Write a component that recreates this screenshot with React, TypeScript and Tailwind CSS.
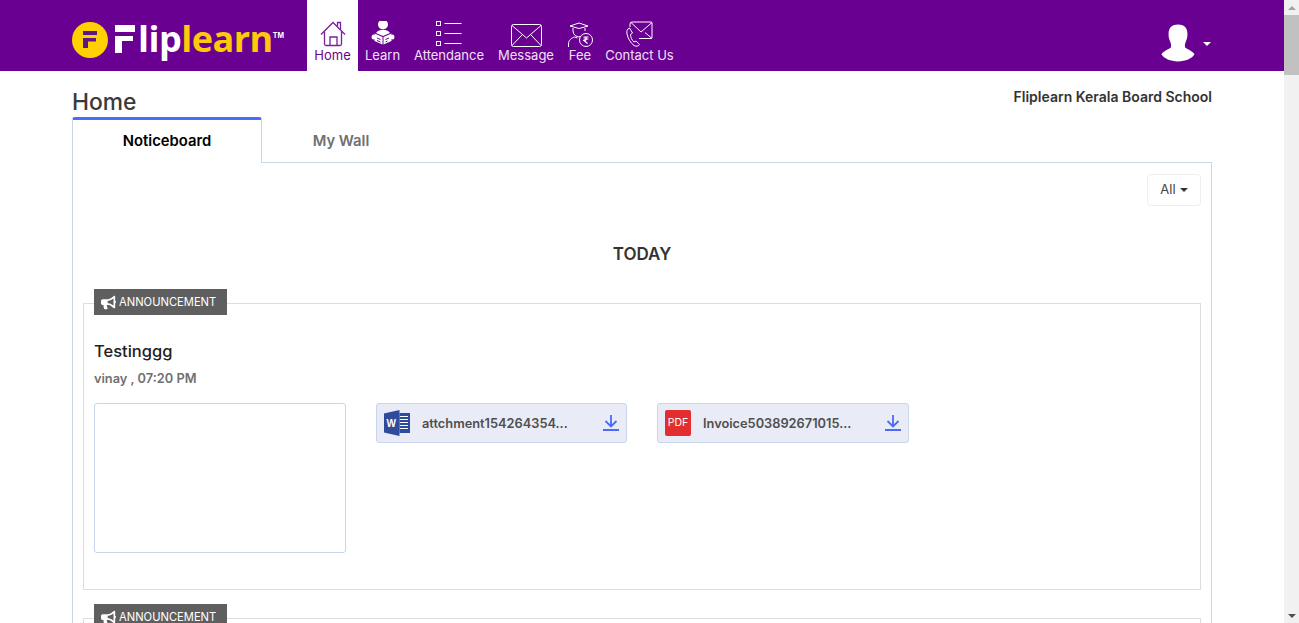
import { FaBullhorn } from 'react-icons/fa';

function HomeIcon() {
  return (
    <svg width="26" height="26" viewBox="0 0 26 26" fill="none" stroke="#7a1fa0" strokeWidth="1.300">
      <path d="M1 13.500 13 1.500 25 13.500" />
      <path d="M4.500 10.500V23a1.500 1.500 0 0 0 1.500 1.500h14a1.500 1.500 0 0 0 1.500-1.500V10.500" />
      <path d="M10 24.500v-8.500h7v8.500" />
      <path d="M17.500 5V1.500h3v7" />
    </svg>
  );
}

function LearnIcon() {
  return (
    <svg width="24" height="26" viewBox="0 2 24 26" fill="white">
      <circle cx="12" cy="5.500" r="5" />
      <path d="M5 14c1.500-2.500 4-3 7-3s5.500.5 7 3l-7 3z" />
      <path d="M3.500 14.500 11.500 18v7.500l-8-3.500z" />
      <path d="M20.500 14.500 12.500 18v7.500l8-3.500z" />
      <ellipse cx="2.500" cy="18" rx="2" ry="2.500" />
      <ellipse cx="21.500" cy="18" rx="2" ry="2.500" />
      <path d="M14.500 20.500l3.500-1.500M14.500 23l2-1" stroke="#6a0091" strokeWidth="1" />
      <path d="M9.500 20.500 6 19M9.500 23l-3.500-1.500" stroke="#6a0091" strokeWidth="1" />
    </svg>
  );
}

function AttendanceIcon() {
  return (
    <svg width="26" height="26" viewBox="0 0 26 26" fill="none" stroke="white" strokeWidth="1">
      <rect x="0.500" y="0.500" width="4" height="4" />
      <rect x="0.500" y="10.500" width="4" height="4" />
      <rect x="0.500" y="20.500" width="4" height="4" />
      <path d="M8.500 2.500h17M8.500 12.500h17M8.500 22.500h17" />
    </svg>
  );
}

function MessageIcon() {
  return (
    <svg width="31" height="23" viewBox="0 0 31 23" fill="none" stroke="white" strokeWidth="1">
      <rect x="0.500" y="0.500" width="30" height="22" rx="2" />
      <path d="M1 1.500 15.500 14 30 1.500M1 21.500l10-10.500M30 21.500 20 11" />
    </svg>
  );
}

function FeeIcon() {
  return (
    <svg width="25" height="25" viewBox="0 0 25 25" fill="none" stroke="white" strokeWidth="1">
      <path d="M2 4 11 1l9 3-9 2.500z" />
      <path d="M5 6v3a6 6 0 0 0 8 5.500M17 6v3" />
      <path d="M.5 25v-3c0-4 3-6 6-7l3 1" />
      <circle cx="18" cy="18" r="6.500" />
      <path d="M15.500 15h5M15.500 17h5M16 15c3 0 3 3.500 0 3.500l3.500 3" strokeWidth="1.200" />
    </svg>
  );
}

function ContactIcon() {
  return (
    <svg width="27" height="26" viewBox="0 0 27 26" fill="none" stroke="white" strokeWidth="1">
      <path d="M4 6V3a2 2 0 0 1 2-2h19a1 1 0 0 1 1 1v14.500a1 1 0 0 1-1 1H13" />
      <path d="M5 1.500 15 11 26 1.500M19 11.500l7 6" />
      <path d="M3.500 7C1 8 .500 10 1 13c.800 4 3.500 9 7 11.500 2 1.200 4.500 1 5.500-1l-3.500-3.500-2 1C6 19.500 4.500 16 4.500 13.500L6.500 12z" />
    </svg>
  );
}

function UserSilhouette() {
  return (
    <svg width="34" height="40" viewBox="0 0 36 41" fill="white">
      <path d="M18 1c6 0 10 3 10 10 0 3-.5 5-1.500 7.500C25.500 21 25 23 25.500 25c1 2 8 3.500 10 7.500C33 37 26 40 18 40S3 37 .500 32.500C2.500 28.500 9.500 27 10.500 25c.5-2 0-4-1-6.500C8.500 16 8 14 8 11 8 4 12 1 18 1z" />
    </svg>
  );
}

function DownloadIcon() {
  return (
    <svg width="16" height="16" viewBox="0 0 16 16" fill="none" stroke="#4a6cf7" strokeWidth="1.800">
      <path d="M8 0v11M2.500 6 8 11.500 13.500 6M0 15h16" />
    </svg>
  );
}

function WordIcon() {
  return (
    <svg width="26" height="26" viewBox="0 0 26 26">
      <path d="M0 3.500 15.500 0v26L0 22.500z" fill="#2f4b9b" />
      <rect x="15.500" y="3" width="10.500" height="20" fill="#2f4b9b" />
      <path d="M16 6.500h8M16 9.500h8M16 12.500h8M16 15.500h8M16 18.500h8" stroke="white" strokeWidth="1.200" />
      <text x="2.600" y="17" fontSize="10" fontWeight="700" fill="white" fontFamily="'Liberation Sans', sans-serif">W</text>
    </svg>
  );
}

const navItems = [
  { label: 'Home', icon: <HomeIcon />, width: 'w-[51px]', active: true },
  { label: 'Learn', icon: <LearnIcon />, width: 'w-[49px]' },
  { label: 'Attendance', icon: <AttendanceIcon />, width: 'w-[84px]' },
  { label: 'Message', icon: <MessageIcon />, width: 'w-[70px]' },
  { label: 'Fee', icon: <FeeIcon />, width: 'w-[38px]' },
  { label: 'Contact Us', icon: <ContactIcon />, width: 'w-[81px]' },
];

function Attachment({ icon, name, width }: { icon: React.ReactNode; name: string; width: string }) {
  return (
    <div className={`${width} h-10 bg-[#e9ecf6] border border-[#c8d6ec] rounded-[3px] flex items-center pl-[7px] pr-[7px]`}>
      <div className="w-[26px] flex justify-center shrink-0">{icon}</div>
      <span className="ml-[12px] pt-[1px] text-[12.800px] font-semibold text-[#4f4f4f] flex-1 whitespace-nowrap">{name}</span>
      <DownloadIcon />
    </div>
  );
}

function Badge() {
  return (
    <div className="w-[133px] h-[26px] bg-[#5f5f5f] text-white text-[11.200px] flex items-center pl-[7px] gap-[3px] ml-[10px] -mt-[15px]">
      <FaBullhorn size={15} />
      <span>ANNOUNCEMENT</span>
    </div>
  );
}

export default function App() {
  return (
    <div className="flex h-[623px] overflow-hidden font-['Inter','Lato',sans-serif] bg-white">
      <div className="flex-1 min-w-0">
        <header className="h-[71px] bg-[#6a0091]">
          <div className="w-[1140px] mx-auto h-full flex">
            <div className="w-[235px] flex items-start pt-[22px]">
              <svg width="36" height="36" viewBox="0 0 36 36" className="shrink-0">
                <circle cx="18" cy="18" r="18" fill="#ffd100" />
                <path d="M11 9h14v4H11zM11 16h13v3.500h-8V26h-5z" fill="#5c1780" />
              </svg>
              <svg width="20" height="28" viewBox="0 0 20 28" fill="white" className="ml-[7px] mt-[3px] shrink-0">
                <rect x="0" y="0" width="20" height="7" />
                <rect x="0" y="11" width="7" height="17" />
                <rect x="7" y="11" width="11" height="5" />
              </svg>
              <span className="ml-[3px] -mt-[1px] text-[36px] leading-none font-bold font-['Open_Sans',sans-serif] tracking-[-0.500px] text-white">
                lip<span className="text-[#ffc90b]">learn</span>
              </span>
              <span className="mt-[9px] text-[7px] leading-[9px] font-bold text-white">TM</span>
            </div>
            <nav className="flex">
              {navItems.map(item => (
                <div
                  key={item.label}
                  className={`${item.width} h-[71px] flex flex-col items-center justify-end pb-[7px] ${item.active ? 'bg-white text-[#6a008f]' : 'text-[#f0e0f6]'}`}
                >
                  <div className="h-[30px] flex items-end -mb-[1px]">{item.icon}</div>
                  <span className="text-[13px] leading-[18px] whitespace-nowrap">{item.label}</span>
                </div>
              ))}
            </nav>
            <div className="ml-auto flex items-start pt-[23px] pr-[1px]">
              <UserSilhouette />
              <div className="ml-[8px] mt-[19px] w-0 h-0 border-x-[4.500px] border-x-transparent border-t-[4px] border-t-white" />
            </div>
          </div>
        </header>

        <main className="w-[1140px] mx-auto">
          <div className="flex justify-between h-[46px]">
            <h1 className="text-[22.800px] leading-[30px] mt-[16px] text-[#3a3a3a] font-medium">Home</h1>
            <span className="text-[14px] font-semibold text-[#333] mt-[17px] leading-[18px]">Fliplearn Kerala Board School</span>
          </div>

          <div className="flex h-[46px] relative z-10">
            <div className="w-[190px] h-[46px] border-x border-[#c9d6e3] border-t-[3px] border-t-[#4a6cf7] rounded-t-[3px] bg-white flex items-center justify-center text-[14.800px] font-semibold text-black">
              Noticeboard
            </div>
            <div className="w-[158px] h-[46px] pt-[3px] flex items-center justify-center text-[14.800px] font-semibold text-[#707070] border-b border-[#c9d6e3]">
              My Wall
            </div>
          </div>

          <div className="border border-[#c9d6e3] -mt-[1px] px-[10px] pt-[11px] h-[600px]">
            <div className="flex justify-end">
              <div className="w-[54px] h-[32px] border border-[#eeeeee] rounded-[4px] flex items-center justify-center gap-[4px] text-[13px] text-[#444]">
                All
                <span className="w-0 h-0 border-x-[4px] border-x-transparent border-t-[4px] border-t-[#333]" />
              </div>
            </div>

            <h2 className="text-center text-[17px] leading-[20px] font-semibold text-[#333] mt-[38px]">TODAY</h2>

            <section className="mt-[39px] h-[287px] border border-[#dddddd]">
              <Badge />
              <div className="px-[10px]">
                <h3 className="text-[16.500px] leading-[22px] font-medium text-[#222] mt-[25px]">Testinggg</h3>
                <p className="text-[12.800px] leading-[16px] font-semibold text-[#707070] mt-[9px]">vinay , 07:20 PM</p>
                <div className="flex items-start mt-[16px]">
                  <div className="w-[252px] h-[150px] border border-[#c8d6ec] rounded-[3px]" />
                  <div className="ml-[30px]">
                    <Attachment icon={<WordIcon />} name="attchment154264354..." width="w-[251px]" />
                  </div>
                  <div className="ml-[30px]">
                    <Attachment
                      width="w-[252px]"
                      icon={
                        <div className="w-[26px] h-[26px] bg-[#e22e2e] rounded-[2px] text-white text-[10.500px] flex items-center justify-center">
                          PDF
                        </div>
                      }
                      name="Invoice503892671015..."
                    />
                  </div>
                </div>
              </div>
            </section>

            <section className="mt-[28px] border border-[#dddddd] h-[60px]">
              <Badge />
            </section>
          </div>
        </main>
      </div>

      <div className="w-[15px] shrink-0 bg-[#f1f1f1] flex flex-col items-center">
        <div className="h-[15px] flex items-center">
          <span className="w-0 h-0 border-x-[4px] border-x-transparent border-b-[4px] border-b-[#a3a3a3]" />
        </div>
        <div className="w-full h-[60px] bg-[#c1c1c1]" />
        <div className="mt-auto h-[15px] flex items-center">
          <span className="w-0 h-0 border-x-[4px] border-x-transparent border-t-[4px] border-t-[#505050]" />
        </div>
      </div>
    </div>
  );
}
